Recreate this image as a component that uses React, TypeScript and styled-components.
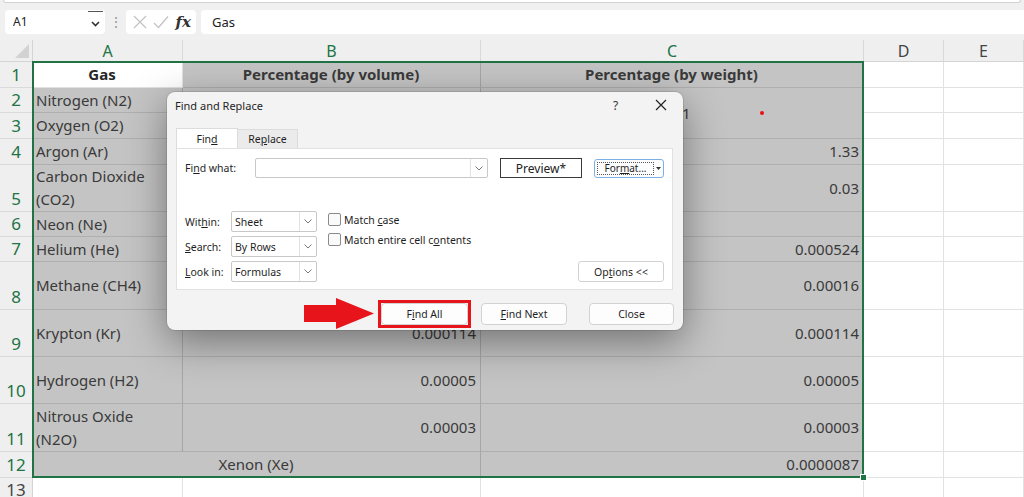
import React from "react";
import styled, { createGlobalStyle } from "styled-components";

const GREEN = "#217346";

const GlobalStyle = createGlobalStyle`
	html, body {
		margin: 0;
		padding: 0;
		background: #ffffff;
		overflow: hidden;
	}
	body {
		font-family: "Noto Sans", "Liberation Sans", sans-serif;
	}
`;

// sheet geometry
const COLS = [33, 150, 298, 383, 80, 80];
const ROWS = [22, 26, 25, 26, 26, 47, 25, 25, 48, 47, 47, 48, 26, 25];
const LETTERS = ["A", "B", "C", "D", "E"];

type Align = "left" | "center" | "right";

type CellInfo = {
	text?: string;
	align?: Align;
	bold?: boolean;
	rowSpan?: number;
	colSpan?: number;
};

const data: Record<string, CellInfo> = {
	"1,0": { text: "Gas", align: "center", bold: true },
	"1,1": { text: "Percentage (by volume)", align: "center", bold: true },
	"1,2": { text: "Percentage (by weight)", align: "center", bold: true },
	"2,0": { text: "Nitrogen (N2)" },
	"2,1": { text: "78.08", align: "right" },
	"2,2": { text: "23.01", align: "center", rowSpan: 2 },
	"3,0": { text: "Oxygen (O2)" },
	"3,1": { text: "20.95", align: "right" },
	"4,0": { text: "Argon (Ar)" },
	"4,1": { text: "0.93", align: "right" },
	"4,2": { text: "1.33", align: "right" },
	"5,0": { text: "Carbon Dioxide (CO2)" },
	"5,1": { text: "0.04", align: "right" },
	"5,2": { text: "0.03", align: "right" },
	"6,0": { text: "Neon (Ne)" },
	"6,1": { text: "0.0018", align: "right" },
	"7,0": { text: "Helium (He)" },
	"7,1": { text: "0.0005", align: "right" },
	"7,2": { text: "0.000524", align: "right" },
	"8,0": { text: "Methane (CH4)" },
	"8,1": { text: "0.00017", align: "right" },
	"8,2": { text: "0.00016", align: "right" },
	"9,0": { text: "Krypton (Kr)" },
	"9,1": { text: "0.000114", align: "right" },
	"9,2": { text: "0.000114", align: "right" },
	"10,0": { text: "Hydrogen (H2)" },
	"10,1": { text: "0.00005", align: "right" },
	"10,2": { text: "0.00005", align: "right" },
	"11,0": { text: "Nitrous Oxide (N2O)" },
	"11,1": { text: "0.00003", align: "right" },
	"11,2": { text: "0.00003", align: "right" },
	"12,0": { text: "Xenon (Xe)", align: "center", colSpan: 2 },
	"12,2": { text: "0.0000087", align: "right" },
};

const covered = new Set(["3,2", "12,1"]);

const isSelected = (row: number, col: number) => row >= 1 && row <= 12 && col <= 2 && !(row === 1 && col === 0);

const App = () => {
	const cells: React.ReactNode[] = [];
	for (let r = 1; r <= 13; r++) {
		cells.push(
			<RowHead key={`rh${r}`} $row={r} $sel={r <= 12}>
				{r}
			</RowHead>,
		);
		for (let c = 0; c < 5; c++) {
			const key = `${r},${c}`;
			if (covered.has(key)) continue;
			const info = data[key] || {};
			cells.push(
				<Cell
					key={key}
					$row={r}
					$col={c}
					$rs={info.rowSpan || 1}
					$cs={info.colSpan || 1}
					$align={info.align || "left"}
					$bold={!!info.bold}
					$sel={isSelected(r, c)}
					$wrapNarrow={c === 0 && !info.colSpan}
				>
					{info.text && <span>{info.text}</span>}
				</Cell>,
			);
		}
	}

	return (
		<>
			<GlobalStyle />
			<Page>
				<RibbonEdge />
				<FormulaBar>
					<NameBox>
						A1
						<NameDrop>
							<svg width="9" height="6" viewBox="0 0 9 6">
								<path d="M1 1 L4.5 4.5 L8 1" fill="none" stroke="#333" strokeWidth="1.6" />
							</svg>
						</NameDrop>
					</NameBox>
					<Dots>⋮</Dots>
					<FxBox>
						<svg width="14" height="14" viewBox="0 0 14 14">
							<path d="M1 1 L13 13 M13 1 L1 13" stroke="#c2c2c2" strokeWidth="1.2" />
						</svg>
						<svg width="16" height="14" viewBox="0 0 16 14">
							<path d="M1 8 L5.5 12.5 L15 1.5" fill="none" stroke="#c2c2c2" strokeWidth="1.2" />
						</svg>
						<FxLabel>fx</FxLabel>
					</FxBox>
					<FormulaInput>Gas</FormulaInput>
				</FormulaBar>

				<Sheet>
					<Corner>
						<svg width="14" height="14" viewBox="0 0 14 14">
							<path d="M14 0 L14 14 L0 14 Z" fill="#d2d2d2" />
						</svg>
					</Corner>
					{LETTERS.map((l, i) => (
						<ColHead key={l} $col={i} $sel={i <= 2}>
							{l}
						</ColHead>
					))}
					{cells}
					<Selection>
						<FillHandle />
					</Selection>
				</Sheet>

				<RedDot />

				<Dialog>
					<TitleBar>
						<Title>Find and Replace</Title>
						<TitleButton>?</TitleButton>
						<TitleButton>
							<svg width="12" height="12" viewBox="0 0 12 12">
								<path d="M1 1 L11 11 M11 1 L1 11" stroke="#222" strokeWidth="1.2" />
							</svg>
						</TitleButton>
					</TitleBar>
					<TabBar>
						<Tab $active>
							<span>
								Fin<u>d</u>
							</span>
						</Tab>
						<Tab>
							<span>
								Re<u>p</u>lace
							</span>
						</Tab>
					</TabBar>
					<Panel>
						<FindRow>
							<FieldLabel>
								Fi<u>n</u>d what:
							</FieldLabel>
							<Combo $w={233} $h={20}>
								<ComboText />
								<ComboDrop>
									<Chevron />
								</ComboDrop>
							</Combo>
							<PreviewBox>Preview*</PreviewBox>
							<FormatButton>
								<FormatFace>
									<span>
										For<u>m</u>at...
									</span>
								</FormatFace>
								<FormatArrow>
									<svg width="5" height="3" viewBox="0 0 5 3">
										<path d="M0 0 L5 0 L2.5 3 Z" fill="#333" />
									</svg>
								</FormatArrow>
							</FormatButton>
						</FindRow>
						<OptionsArea>
							<SelectGrid>
								<SmallLabel>
									Wit<u>h</u>in:
								</SmallLabel>
								<Combo $w={86} $h={21}>
									<ComboText>Sheet</ComboText>
									<ComboDrop>
										<Chevron />
									</ComboDrop>
								</Combo>
								<SmallLabel>
									<u>S</u>earch:
								</SmallLabel>
								<Combo $w={86} $h={21}>
									<ComboText>By Rows</ComboText>
									<ComboDrop>
										<Chevron />
									</ComboDrop>
								</Combo>
								<SmallLabel>
									<u>L</u>ook in:
								</SmallLabel>
								<Combo $w={86} $h={21}>
									<ComboText>Formulas</ComboText>
									<ComboDrop>
										<Chevron />
									</ComboDrop>
								</Combo>
							</SelectGrid>
							<CheckColumn>
								<CheckRow>
									<CheckBox />
									<span>
										Match <u>c</u>ase
									</span>
								</CheckRow>
								<CheckRow>
									<CheckBox />
									<span>
										Match entire cell c<u>o</u>ntents
									</span>
								</CheckRow>
							</CheckColumn>
							<OptionsButton>
								<span>
									Op<u>t</u>ions &lt;&lt;
								</span>
							</OptionsButton>
						</OptionsArea>
					</Panel>
					<ButtonRow>
						<svg width="70" height="31" viewBox="0 0 70 31">
							<rect x="0" y="7" width="33" height="17" fill="#e8141c" />
							<path d="M32 0 L70 15.5 L32 31 Z" fill="#e8141c" />
						</svg>
						<Highlight>
							<DialogButton $w={87}>
								<span>
									F<u>i</u>nd All
								</span>
							</DialogButton>
						</Highlight>
						<DialogButton $w={86} $gap={10}>
							<span>
								<u>F</u>ind Next
							</span>
						</DialogButton>
						<DialogButton $w={85} $gap={22}>
							<span>Close</span>
						</DialogButton>
					</ButtonRow>
				</Dialog>
			</Page>
		</>
	);
};

const Chevron = () => (
	<svg width="8" height="5" viewBox="0 0 8 5">
		<path d="M0.5 0.5 L4 4 L7.5 0.5" fill="none" stroke="#777" strokeWidth="1" />
	</svg>
);

export default App;

const Page = styled.div`
	position: relative;
	width: 1024px;
	height: 497px;
	overflow: hidden;
	background: #f0f0f0;
`;

const RibbonEdge = styled.div`
	height: 2px;
	margin: 0 3px;
	background: #ffffff;
	border: 1px solid #d2d2d2;
	border-top: none;
	border-radius: 0 0 6px 6px;
`;

const FormulaBar = styled.div`
	display: flex;
	align-items: center;
	height: 37px;
	padding-left: 5px;
	box-sizing: border-box;
`;

const NameBox = styled.div`
	display: flex;
	align-items: center;
	width: 100px;
	height: 24px;
	box-sizing: border-box;
	padding-left: 8px;
	background: #ffffff;
	border-radius: 4px;
	font-size: 12px;
	color: #222;
`;

const NameDrop = styled.div`
	display: flex;
	align-items: center;
	justify-content: center;
	margin-left: auto;
	margin-right: 2px;
	width: 15px;
	height: 22px;
	box-sizing: border-box;
	border-top: 1.5px solid #555;
	padding-top: 4px;
`;

const Dots = styled.div`
	width: 21px;
	text-align: center;
	color: #9a9a9a;
	font-size: 14px;
`;

const FxBox = styled.div`
	display: flex;
	align-items: center;
	justify-content: space-between;
	width: 70px;
	height: 24px;
	box-sizing: border-box;
	padding: 0 5px 0 7px;
	background: #ffffff;
	border-radius: 4px;
`;

const FxLabel = styled.span`
	font-family: "DejaVu Serif", "Liberation Serif", serif;
	font-style: italic;
	font-weight: 700;
	font-size: 15px;
	color: #333;
`;

const FormulaInput = styled.div`
	display: flex;
	align-items: center;
	flex: 1;
	height: 24px;
	margin-left: 5px;
	padding-left: 11px;
	background: #ffffff;
	border-radius: 4px 0 0 4px;
	font-size: 13px;
	color: #222;
`;

const Sheet = styled.div`
	display: grid;
	grid-template-columns: ${COLS.map((c) => `${c}px`).join(" ")};
	grid-template-rows: ${ROWS.map((r) => `${r}px`).join(" ")};
	background: #ffffff;
`;

const Corner = styled.div`
	grid-row: 1;
	grid-column: 1;
	display: flex;
	align-items: flex-end;
	justify-content: flex-end;
	padding: 0 3px 3px 0;
	box-sizing: border-box;
	background: #efefef;
	border-right: 1px solid #d4d4d4;
	border-bottom: 1px solid #d4d4d4;
`;

const ColHead = styled.div<{ $col: number; $sel: boolean }>`
	grid-row: 1;
	grid-column: ${(p) => p.$col + 2};
	display: flex;
	align-items: center;
	justify-content: center;
	box-sizing: border-box;
	background: #efefef;
	border-right: 1px solid #d9d9d9;
	border-bottom: 1px solid #d4d4d4;
	font-size: 16px;
	color: ${(p) => (p.$sel ? GREEN : "#444")};
`;

const RowHead = styled.div<{ $row: number; $sel: boolean }>`
	grid-row: ${(p) => p.$row + 1};
	grid-column: 1;
	display: flex;
	align-items: flex-end;
	justify-content: center;
	box-sizing: border-box;
	background: #efefef;
	border-right: 1px solid #d4d4d4;
	border-bottom: 1px solid #dadada;
	font-size: 17px;
	line-height: 24px;
	color: ${(p) => (p.$sel ? GREEN : "#444")};
`;

const Cell = styled.div<{
	$row: number;
	$col: number;
	$rs: number;
	$cs: number;
	$align: Align;
	$bold: boolean;
	$sel: boolean;
	$wrapNarrow: boolean;
}>`
	grid-row: ${(p) => p.$row + 1} / span ${(p) => p.$rs};
	grid-column: ${(p) => p.$col + 2} / span ${(p) => p.$cs};
	display: flex;
	align-items: center;
	justify-content: ${(p) => (p.$align === "left" ? "flex-start" : p.$align === "right" ? "flex-end" : "center")};
	text-align: ${(p) => p.$align};
	padding: 0 ${(p) => (p.$wrapNarrow ? 14 : 4)}px 0 3px;
	box-sizing: border-box;
	overflow: hidden;
	background: ${(p) => (p.$sel ? "#c4c4c4" : "#ffffff")};
	border-right: 1px solid ${(p) => (p.$sel ? "#a6a6a6" : "#e1e1e1")};
	border-bottom: 1px solid ${(p) => (p.$sel ? "#afafaf" : "#e1e1e1")};
	font-size: 15px;
	line-height: 23px;
	font-weight: ${(p) => (p.$bold ? 700 : 400)};
	color: ${(p) => (p.$sel ? "#3a3a3a" : "#262626")};
`;

const Selection = styled.div`
	grid-row: 2 / 14;
	grid-column: 2 / 5;
	position: relative;
	z-index: 2;
	margin: -1px 0 0 -1px;
	border: 2px solid ${GREEN};
	pointer-events: none;
`;

const FillHandle = styled.div`
	position: absolute;
	right: -5px;
	bottom: -5px;
	width: 5px;
	height: 5px;
	background: ${GREEN};
	border: 1px solid #ffffff;
`;

const RedDot = styled.div`
	position: absolute;
	left: 760px;
	top: 111px;
	width: 4px;
	height: 4px;
	border-radius: 50%;
	background: #e81010;
`;

const Dialog = styled.div`
	position: absolute;
	left: 167px;
	top: 92px;
	z-index: 5;
	display: flex;
	flex-direction: column;
	width: 516px;
	height: 238px;
	box-sizing: border-box;
	background: #f3f3f3;
	border-radius: 8px;
	box-shadow: 0 0 0 1px rgba(0, 0, 0, 0.1), 0 12px 40px rgba(0, 0, 0, 0.42);
	font-family: "Noto Sans", "Liberation Sans", sans-serif;
	font-size: 10.5px;
	color: #1f1f1f;
`;

const TitleBar = styled.div`
	display: flex;
	align-items: center;
	height: 26px;
	padding-left: 8px;
`;

const Title = styled.div`
	flex: 1;
	font-size: 11px;
`;

const TitleButton = styled.div`
	display: flex;
	align-items: center;
	justify-content: center;
	width: 45px;
	height: 26px;
	font-size: 12px;
	color: #333;
`;

const TabBar = styled.div`
	display: flex;
	align-items: flex-end;
	height: 20px;
	margin-top: 10px;
	padding-left: 9px;
`;

const Tab = styled.div<{ $active?: boolean }>`
	display: flex;
	align-items: center;
	justify-content: center;
	width: ${(p) => (p.$active ? 62 : 60)}px;
	height: ${(p) => (p.$active ? 20 : 19)}px;
	box-sizing: border-box;
	background: ${(p) => (p.$active ? "#ffffff" : "#ebebeb")};
	border: 1px solid #dcdcdc;
	border-bottom: none;
	border-left: ${(p) => (p.$active ? "1px solid #dcdcdc" : "none")};
`;

const Panel = styled.div`
	display: flex;
	flex-direction: column;
	height: 142px;
	margin: 0 10px 0 9px;
	padding: 9px 8px 8px 8px;
	box-sizing: border-box;
	background: #ffffff;
	border: 1px solid #e1e1e1;
`;

const FindRow = styled.div`
	display: flex;
	align-items: center;
	height: 20px;
`;

const FieldLabel = styled.div`
	width: 70px;
`;

const Combo = styled.div<{ $w: number; $h: number }>`
	display: flex;
	width: ${(p) => p.$w}px;
	height: ${(p) => p.$h}px;
	box-sizing: border-box;
	background: #ffffff;
	border: 1px solid #c8c8c8;
	border-radius: 2px;
`;

const ComboText = styled.div`
	display: flex;
	align-items: center;
	flex: 1;
	padding-left: 3px;
`;

const ComboDrop = styled.div`
	display: flex;
	align-items: center;
	justify-content: center;
	width: 16px;
	border-left: 1px solid #e2e2e2;
`;

const PreviewBox = styled.div`
	display: flex;
	align-items: center;
	justify-content: center;
	width: 82px;
	height: 20px;
	margin-left: 12px;
	box-sizing: border-box;
	border: 1px solid #3a3a3a;
	font-size: 12px;
	color: #222;
`;

const FormatButton = styled.div`
	display: flex;
	width: 70px;
	height: 19px;
	margin-left: 12px;
	padding: 2px 0 2px 2px;
	box-sizing: border-box;
	background: #fdfdfd;
	border: 1px solid #7cb0e6;
	border-radius: 3px;
`;

const FormatFace = styled.div`
	display: flex;
	align-items: center;
	justify-content: center;
	flex: 1;
	border: 1px dotted #555;
	font-size: 10px;
`;

const FormatArrow = styled.div`
	display: flex;
	align-items: center;
	justify-content: center;
	width: 9px;
`;

const OptionsArea = styled.div`
	display: flex;
	align-items: flex-start;
	flex: 1;
	margin-top: 33px;
`;

const SelectGrid = styled.div`
	display: grid;
	grid-template-columns: 46px 86px;
	row-gap: 4px;
	align-items: center;
`;

const SmallLabel = styled.div`
	font-size: 10.5px;
`;

const CheckColumn = styled.div`
	display: flex;
	flex-direction: column;
	gap: 7px;
	margin: 2px 0 0 11px;
`;

const CheckRow = styled.div`
	display: flex;
	align-items: center;
	height: 13px;
`;

const CheckBox = styled.div`
	width: 13px;
	height: 13px;
	margin-right: 3px;
	box-sizing: border-box;
	border: 1px solid #8a8a8a;
	border-radius: 2px;
	background: #fafafa;
`;

const OptionsButton = styled.div`
	display: flex;
	align-items: center;
	justify-content: center;
	align-self: flex-end;
	width: 86px;
	height: 21px;
	margin-left: auto;
	box-sizing: border-box;
	background: #ffffff;
	border: 1px solid #d2d2d2;
	border-radius: 3px;
`;

const ButtonRow = styled.div`
	display: flex;
	align-items: center;
	justify-content: flex-end;
	margin-top: 8px;
	padding-right: 9px;
`;

const Highlight = styled.div`
	display: flex;
	margin-left: 4px;
	border: 3px solid #e8141c;
`;

const DialogButton = styled.div<{ $w: number; $gap?: number }>`
	display: flex;
	align-items: center;
	justify-content: center;
	width: ${(p) => p.$w}px;
	height: 22px;
	margin-left: ${(p) => p.$gap || 0}px;
	box-sizing: border-box;
	background: #fdfdfd;
	border: 1px solid #d2d2d2;
	border-radius: 4px;
`;
